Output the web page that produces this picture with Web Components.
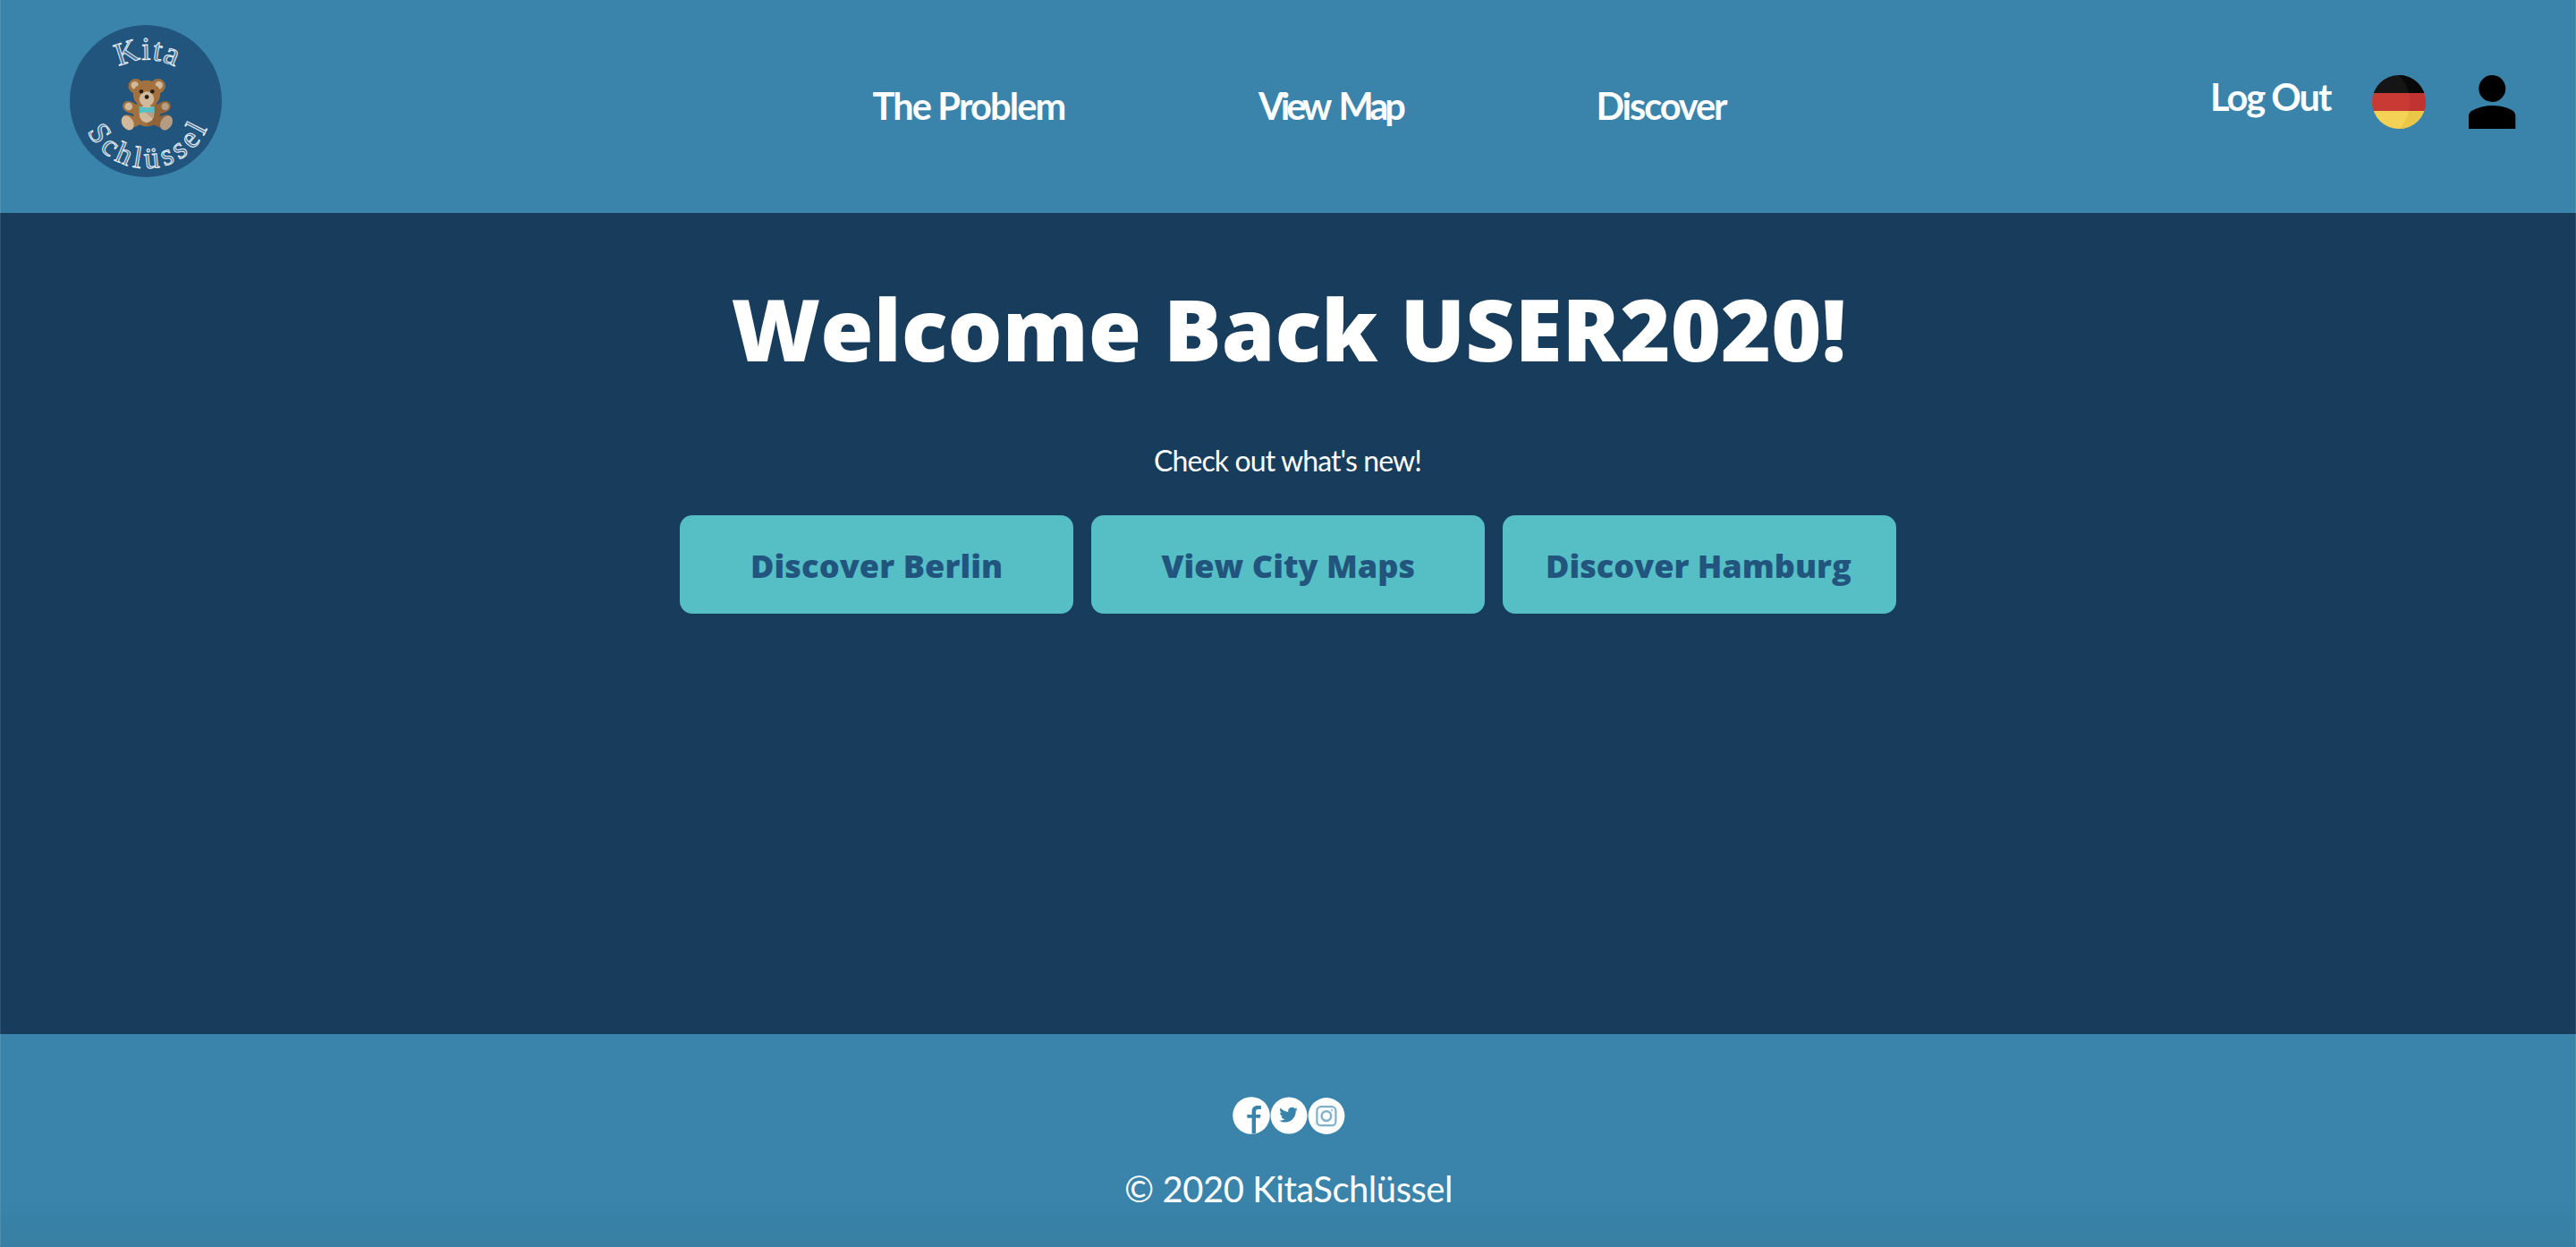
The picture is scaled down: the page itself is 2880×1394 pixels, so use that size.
<!DOCTYPE html>
<html lang="en">
<head>
<meta charset="utf-8">
<title>KitaSchlüssel</title>
<style>
html, body { margin: 0; height: 100%; }
body { background: #173c5c; color: #fff; font-family: Lato, "Open Sans", sans-serif; overflow: hidden; }
</style>
</head>
<body>
<kita-app></kita-app>
<script>
const define = (name, html, init) => {
  const template = document.createElement('template');
  template.innerHTML = html;
  customElements.define(name, class extends HTMLElement {
    connectedCallback() {
      if (this.shadowRoot) return;
      this.attachShadow({ mode: 'open' }).append(template.content.cloneNode(true));
      if (init) init(this, this.shadowRoot);
    }
  });
};

/* One line of text whose letter spacing is set so that its ink fills the given width;
   "gap" is extra space between words. */
const ctx = document.createElement('canvas').getContext('2d');
define('fit-text', `
<style>
:host { display: block; flex: none; white-space: nowrap; }
span { display: block; }
</style>
<span><slot></slot></span>`, (host, root) => {
  const text = host.textContent.trim();
  const target = Number(host.getAttribute('width'));
  const gap = Number(host.getAttribute('gap') || 0);
  const cs = getComputedStyle(host);
  ctx.font = `${cs.fontWeight} ${cs.fontSize} ${cs.fontFamily}`;
  const m = ctx.measureText(text);
  const ink = m.actualBoundingBoxLeft + m.actualBoundingBoxRight + gap * (text.split(' ').length - 1);
  const span = root.querySelector('span');
  host.style.width = target + 'px';
  span.style.wordSpacing = gap + 'px';
  span.style.letterSpacing = (target - ink) / (text.length - 1) + 'px';
  span.style.marginLeft = m.actualBoundingBoxLeft + 'px';
});

define('kita-logo', `
<style>
:host { display: block; width: 170px; height: 170px; }
svg { display: block; }
text { font-family: "Liberation Serif", serif; fill: #ffffff30; stroke: #e9f1f7; stroke-width: 1; }
</style>
<svg width="170" height="170" viewBox="0 0 170 170">
  <defs>
    <path id="top" d="M55 47 A64 64 0 0 1 118 47"/>
    <path id="bottom" d="M19.500 119 A74 74 0 0 0 153.500 116"/>
  </defs>
  <circle cx="85" cy="85" r="85" fill="#21557e"/>
  <text font-size="36"><textPath href="#top" textLength="65" lengthAdjust="spacing">Kita</textPath></text>
  <text font-size="34"><textPath href="#bottom" textLength="168" lengthAdjust="spacing">Schlüssel</textPath></text>
  <g fill="#a2713f">
    <circle cx="73.700" cy="68.200" r="8.200"/><circle cx="98.700" cy="68.200" r="8.200"/>
    <path d="M64 85C70 84 75 90 80 93L78 101C73 99 66 99 62 96C57 92 59 86 64 85Z"/>
    <path d="M108 85C102 84 97 90 92 93L94 101C99 99 106 99 110 96C115 92 113 86 108 85Z" fill="#916338"/>
    <ellipse cx="86" cy="98.500" rx="15" ry="15"/>
    <path d="M59 102C64 98 73 102 78 107L79 111C74 114 70 114 66 117Z"/>
    <path d="M113 102C108 98 99 102 94 107L93 111C98 114 102 114 106 117Z" fill="#916338"/>
    <path d="M95 87C101 92 103 101 98 108Q93 113 86 113.500Z" fill="#916338"/>
    <circle cx="86" cy="77" r="15.200"/>
  </g>
  <g fill="#d1b99c">
    <path d="M70.500 71A4.300 4.300 0 1 1 77 67Q73 69 71.500 72Z"/>
    <path d="M101.900 71A4.300 4.300 0 1 0 95.400 67Q99.400 69 100.900 72Z"/>
    <circle cx="65.800" cy="91" r="4.300"/><circle cx="106.700" cy="91" r="4.300" fill="#b59d83"/>
    <ellipse cx="64.700" cy="109.300" rx="6.300" ry="8.700" transform="rotate(-32 64.700 109.300)"/>
    <ellipse cx="108" cy="109.300" rx="6.300" ry="8.700" transform="rotate(32 108 109.300)" fill="#b59d83"/>
    <ellipse cx="86" cy="99" rx="8.300" ry="10.200"/>
    <path d="M84 97H94.300Q94.500 101 92 104Z" fill="#b59d83"/>
    <circle cx="86" cy="82.600" r="8.300"/>
  </g>
  <path d="M77.700 90.800Q86 93.500 94.700 90.800V98.800Q86 96 77.700 98.800Z" fill="#56bec5"/>
  <g fill="#271d18"><circle cx="80" cy="74.200" r="2.300"/><circle cx="92.300" cy="74.200" r="2.300"/><circle cx="86.100" cy="80.400" r="2.400"/></g>
</svg>`);

define('flag-icon', `
<style>:host { display: block; } svg { display: block; }</style>
<svg width="60" height="60" viewBox="0 0 60 60">
  <clipPath id="disc"><circle cx="30" cy="30" r="30"/></clipPath>
  <g clip-path="url(#disc)">
    <path fill="#151515" d="M0 0H60V20H0Z"/><path fill="#c93a34" d="M0 20H60V40H0Z"/><path fill="#f3d255" d="M0 40H60V60H0Z"/>
    <path fill="#080808" d="M30 0H60V20H41Q38 7 30 0Z"/>
    <path fill="#c03330" d="M41 20H60V40H41Q43.500 30 41 20Z"/>
    <path fill="#ebc648" d="M41 40H60V60H30Q38 54 41 40Z"/>
  </g>
</svg>`);

define('user-icon', `
<style>:host { display: block; } svg { display: block; }</style>
<svg width="53" height="60" viewBox="0 0 53 60">
  <circle cx="26.300" cy="15" r="15"/>
  <path d="M0 60V46Q0 41.500 4 39.500C17 32 36 32 49 39.500Q52.300 41.500 52.300 46V60Z"/>
</svg>`);

define('site-header', `
<style>
:host { display: block; height: 238px; background: #3a84ab; }
header { display: flex; align-items: flex-start; box-sizing: border-box; height: 100%; padding: 28px 67px 0 78px; }
nav { display: flex; gap: 215.500px; margin: 65px 0 0 727.500px; }
.account { display: flex; margin: 55px 0 0 auto; }
fit-text { font: 700 41.500px/50px Lato, sans-serif; }
flag-icon { margin: 1px 48px 0 44px; }
user-icon { margin-top: 1px; }
</style>
<header>
  <kita-logo></kita-logo>
  <nav>
    <fit-text width="215">The Problem</fit-text>
    <fit-text width="166" gap="6">View Map</fit-text>
    <fit-text width="144.500">Discover</fit-text>
  </nav>
  <div class="account">
    <fit-text width="134">Log Out</fit-text>
    <flag-icon></flag-icon>
    <user-icon></user-icon>
  </div>
</header>`);

define('action-button', `
<style>
:host { display: flex; justify-content: center; width: 440px; height: 110px; box-sizing: border-box; padding-top: 33px;
  background: #56bec5; border-radius: 14px; color: #21557e; font: 800 36px/48px "Open Sans", sans-serif; }
</style>
<slot></slot>`);

define('welcome-panel', `
<style>
:host { display: flex; flex-direction: column; align-items: center; height: 918px; background: #173c5c; }
.title { margin-top: 64px; font: 800 96px/130px "Open Sans", sans-serif; }
.lead { margin: 63px 0 42px; font: 400 32px/39px Lato, sans-serif; }
.actions { display: flex; gap: 20px; }
</style>
<fit-text class="title" width="1243">Welcome Back USER2020!</fit-text>
<fit-text class="lead" width="298">Check out what's new!</fit-text>
<div class="actions">
  <action-button><fit-text width="278">Discover Berlin</fit-text></action-button>
  <action-button><fit-text width="283">View City Maps</fit-text></action-button>
  <action-button><fit-text width="340">Discover Hamburg</fit-text></action-button>
</div>`);

define('social-links', `
<style>:host { display: flex; padding-left: 2px; } svg { display: block; }</style>
<svg width="42" height="42" viewBox="0 0 42 42">
  <circle cx="21" cy="21" r="20.800" fill="#fff"/>
  <path d="M21.600 41.500V23.800H16.300V20.100H21.600V16.800C21.600 12.500 23.800 10 28 10H31.900V13.900H29C26.800 13.900 26 14.800 26 17V20.100H31.500L30.900 23.800H26V41Z" fill="#3a84ab"/>
</svg>
<svg width="42" height="42" viewBox="0 0 42 42">
  <circle cx="21" cy="21" r="20.500" fill="#fff"/>
  <path transform="translate(10.200 9.900) scale(.86)" fill="#3a84ab" d="M23.953 4.570a10 10 0 01-2.825.775 4.958 4.958 0 002.163-2.723c-.951.555-2.005.959-3.127 1.184a4.920 4.920 0 00-8.384 4.482C7.690 8.095 4.067 6.130 1.640 3.162a4.822 4.822 0 00-.666 2.475c0 1.710.870 3.213 2.188 4.096a4.904 4.904 0 01-2.228-.616v.060a4.923 4.923 0 003.946 4.827 4.996 4.996 0 01-2.212.085 4.936 4.936 0 004.604 3.417 9.867 9.867 0 01-6.102 2.105c-.390 0-.779-.023-1.170-.067a13.995 13.995 0 007.557 2.209c9.053 0 13.998-7.496 13.998-13.985 0-.210 0-.420-.015-.630A9.935 9.935 0 0024 4.590z"/>
</svg>
<svg width="42" height="42" viewBox="0 0 42 42">
  <circle cx="21" cy="21.500" r="20.400" fill="#fff"/>
  <g fill="none" stroke="#80b0ca" stroke-width="2.200">
    <rect x="10.400" y="11.200" width="21" height="21" rx="4.500"/>
    <circle cx="20.900" cy="21.600" r="5.300" stroke-width="2.500"/>
  </g>
  <circle cx="27" cy="15" r="1.300" fill="#a4c7da"/>
</svg>`);

define('site-footer', `
<style>
:host { display: block; height: 238px;
  background: linear-gradient(to top, #377fa2, #3a84ab00 60px), #3a84ab; }
footer { display: flex; flex-direction: column; align-items: center; padding-top: 70px; }
fit-text { margin: 36px 0 0 1px; font: 400 40px/50px Lato, sans-serif; }
</style>
<footer>
  <social-links></social-links>
  <fit-text width="363">© 2020 KitaSchlüssel</fit-text>
</footer>`);

define('kita-app', `
<style>
:host { display: block; height: 1394px; position: relative; }
:host::after { content: ""; position: absolute; inset: 0; border: solid #ffffff1c; border-width: 0 1px; pointer-events: none; }
</style>
<site-header></site-header>
<welcome-panel></welcome-panel>
<site-footer></site-footer>`);
</script>
</body>
</html>
